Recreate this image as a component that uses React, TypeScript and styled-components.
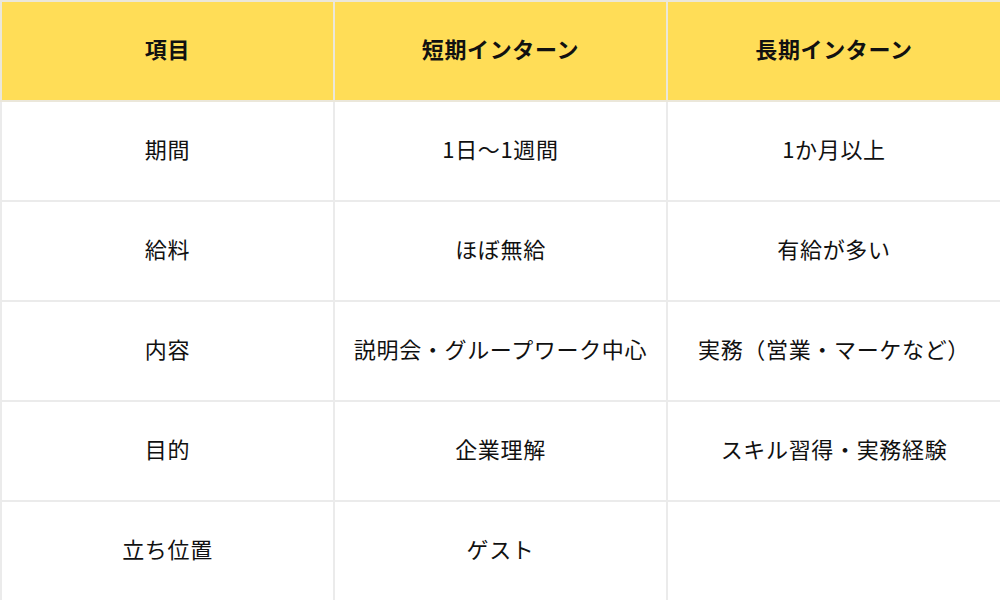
import styled, { createGlobalStyle } from "styled-components";

const GlobalStyle = createGlobalStyle`
  html, body {
    margin: 0;
    padding: 0;
    background: #ffffff;
  }
  body {
    font-family: "Noto Sans CJK JP", "Noto Sans", sans-serif;
    color: #111111;
  }
`

const Table = styled.table`
  width: 1000px;
  border-collapse: collapse;
  table-layout: fixed;
`

const HeadCell = styled.th`
  height: 92px;
  padding: 0 0 6px;
  background: #ffdd57;
  border: 2px solid #ebe7da;
  font-size: 22px;
  font-weight: 700;
  letter-spacing: 0.03em;
  text-align: center;
  color: #111111;
`

const Cell = styled.td`
  height: 92px;
  padding: 0 0 6px;
  border: 2px solid #ebebeb;
  font-size: 22px;
  font-weight: 400;
  text-align: center;
  letter-spacing: 0.03em;
`

type RowType = {
    label: string,
    shortTerm: string,
    longTerm: string,
}

const rows: RowType[] = [
    {label: '期間', shortTerm: '1日〜1週間', longTerm: '1か月以上'},
    {label: '給料', shortTerm: 'ほぼ無給', longTerm: '有給が多い'},
    {label: '内容', shortTerm: '説明会・グループワーク中心', longTerm: '実務（営業・マーケなど）'},
    {label: '目的', shortTerm: '企業理解', longTerm: 'スキル習得・実務経験'},
    {label: '立ち位置', shortTerm: 'ゲスト', longTerm: ''},
]

const App = () => {
    return (
        <>
            <GlobalStyle/>
            <Table>
                <colgroup>
                    <col style={{width: 333}}/>
                    <col style={{width: 333}}/>
                    <col style={{width: 334}}/>
                </colgroup>
                <thead>
                <tr>
                    <HeadCell>項目</HeadCell>
                    <HeadCell>短期インターン</HeadCell>
                    <HeadCell>長期インターン</HeadCell>
                </tr>
                </thead>
                <tbody>
                {rows.map((row) => (
                    <tr key={row.label}>
                        <Cell>{row.label}</Cell>
                        <Cell>{row.shortTerm}</Cell>
                        <Cell>{row.longTerm}</Cell>
                    </tr>
                ))}
                </tbody>
            </Table>
        </>
    )
}

export default App
